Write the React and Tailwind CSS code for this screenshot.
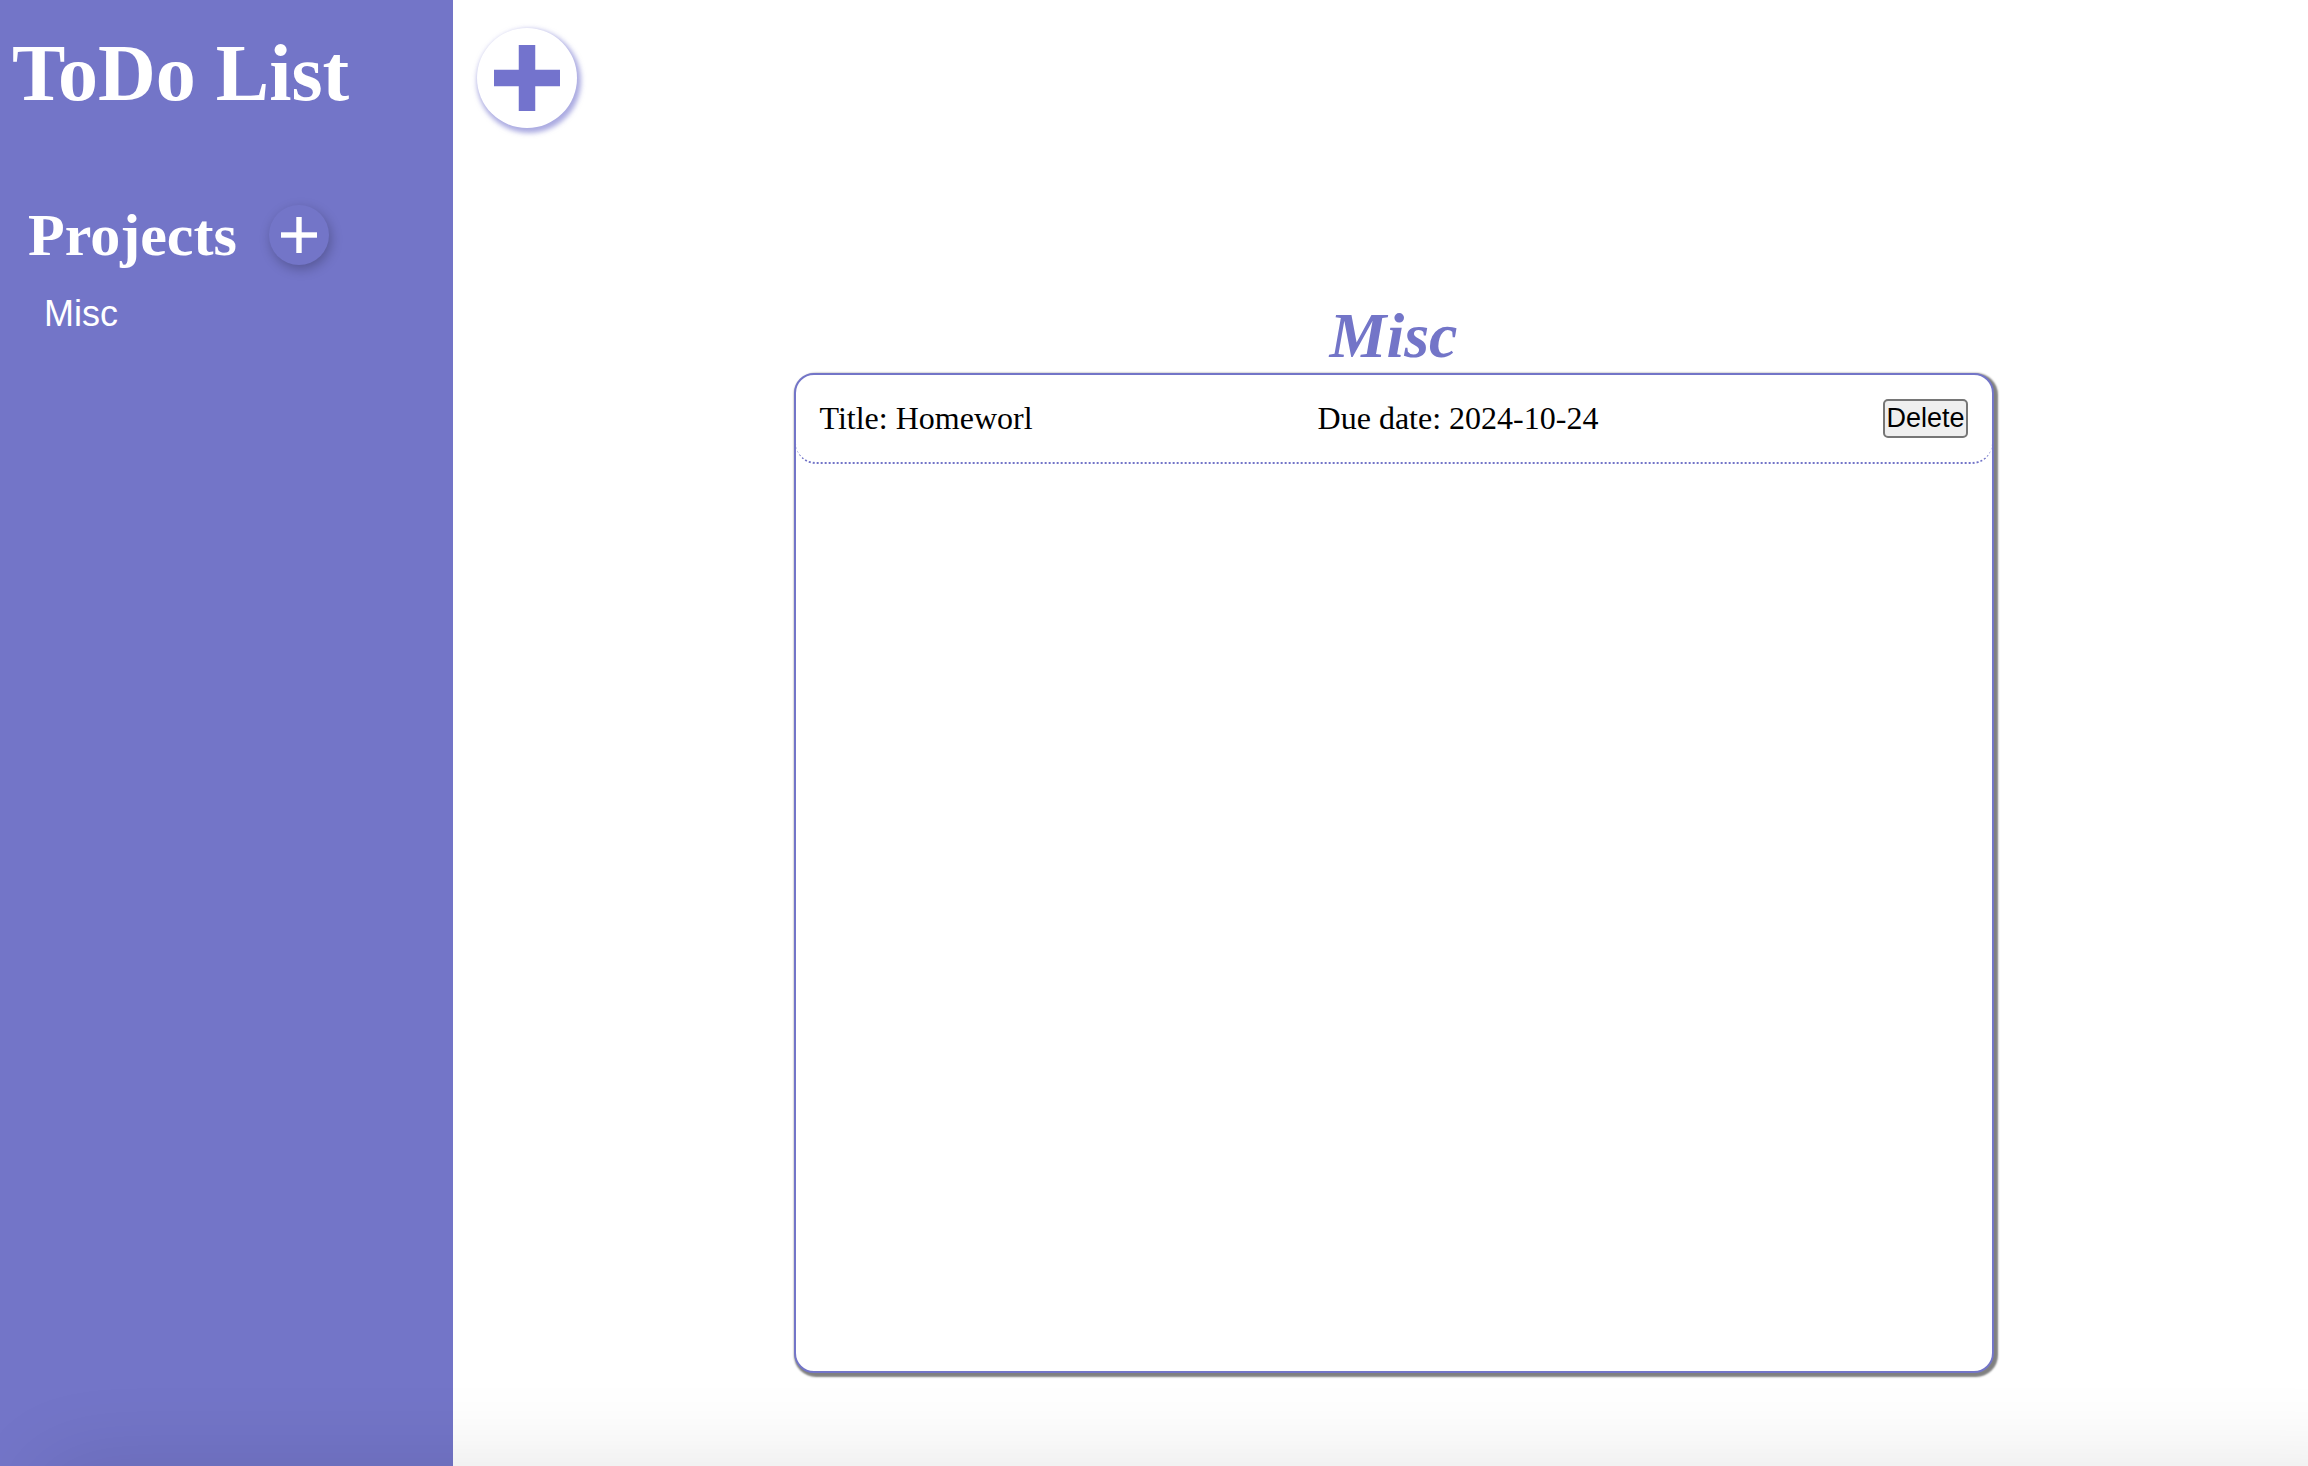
import React from "react";

const todos = [{ title: "Homeworl", due: "2024-10-24" }];

function Plus({ className, thickness }) {
  const start = 50 - thickness / 2;
  return (
    <svg viewBox="0 0 100 100" className={className} fill="currentColor" aria-hidden="true">
      <rect x="0" y={start} width="100" height={thickness} />
      <rect x={start} y="0" width={thickness} height="100" />
    </svg>
  );
}

function Sidebar() {
  return (
    <aside className="w-[453px] shrink-0 bg-[#7375c8] text-white">
      <h1 className="mt-7 pl-3 font-['Liberation_Serif',serif] text-[80px] leading-[90px] font-bold">
        ToDo List
      </h1>
      <div className="mt-[82px] flex items-center gap-8 pl-7">
        <h2 className="font-['Liberation_Serif',serif] text-6xl leading-[70px] font-bold">
          Projects
        </h2>
        <button
          type="button"
          aria-label="Add project"
          className="flex size-[60px] items-center justify-center rounded-full shadow-[2px_4px_12px_rgba(0,0,0,0.25)]"
        >
          <Plus className="size-9" thickness={15} />
        </button>
      </div>
      <ul className="mt-6 pl-11">
        <li>
          <button type="button" className="text-4xl leading-10">
            Misc
          </button>
        </li>
      </ul>
    </aside>
  );
}

export default function App() {
  return (
    <div className="relative flex min-h-screen overflow-hidden bg-white font-['Liberation_Sans',sans-serif]">
      <Sidebar />
      <main className="min-w-0 flex-1">
        <header className="pt-7 pl-6">
          <button
            type="button"
            aria-label="Add task"
            className="flex size-[100px] items-center justify-center rounded-full bg-white text-[#7373cd] shadow-[2px_3px_5px_2px_rgba(115,115,205,0.6)]"
          >
            <Plus className="size-[66px]" thickness={25} />
          </button>
        </header>
        <section className="mt-[170px] ml-[26px] flex flex-col items-center font-['Liberation_Serif',serif]">
          <h2 className="text-[64px] leading-[75px] font-bold text-[#7375c8] italic">Misc</h2>
          <ul className="min-h-[1000px] w-[1200px] max-w-full rounded-[20px] border-2 border-[#7375c8] bg-white shadow-[2px_2px_2px_2px_#808080]">
            {todos.map((todo) => (
              <li
                key={todo.title}
                className="flex items-center justify-between rounded-[20px] border-b-2 border-dotted border-[#7375c8] p-6 text-[32px] leading-[35px] text-black"
              >
                <p>Title: {todo.title}</p>
                <p>Due date: {todo.due}</p>
                <button
                  type="button"
                  className="rounded-[5px] border-2 border-[#767676] bg-[#efefef] px-px font-['Liberation_Sans',sans-serif] text-[27px] leading-[35px]"
                >
                  Delete
                </button>
              </li>
            ))}
          </ul>
        </section>
      </main>
      <div className="pointer-events-none absolute -right-20 -bottom-40 left-11 h-40 rounded-[20px] shadow-[0_0_90px_rgba(0,0,0,0.11)]" />
    </div>
  );
}
